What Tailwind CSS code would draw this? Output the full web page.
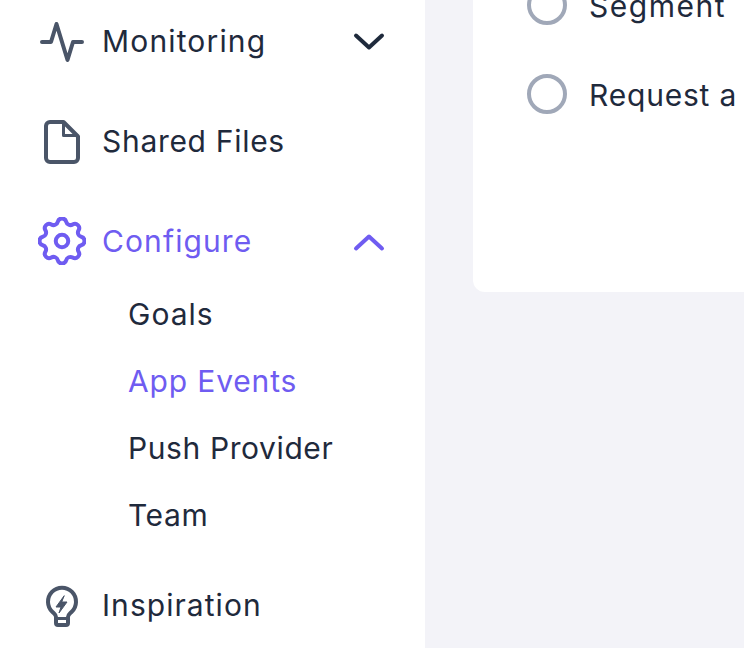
<!DOCTYPE html>
<html>
<head>
<meta charset="utf-8">
<script src="https://cdn.jsdelivr.net/npm/@tailwindcss/browser@4"></script>
</head>
<body class="m-0 overflow-hidden">
<div class="flex w-[744px] h-[648px] overflow-hidden bg-[#f3f3f8] font-['Inter',sans-serif]">
  <nav class="w-[425px] h-full shrink-0 bg-white overflow-hidden text-[30px] leading-[40px] text-[#1f2a3c] font-[375]">
    <div class="-mt-[9px]">
      <div class="h-[100px] flex items-center pl-[38px] pr-[40px]">
        <svg class="w-[48px] h-[48px] shrink-0 text-[#4a5568]" viewBox="0 0 48 48" fill="none" stroke="currentColor" stroke-width="4" stroke-linecap="round" stroke-linejoin="round"><path d="M4 25h9l5.500-18 11 36 5.500-18h9"/></svg>
        <span class="ml-[16px] flex-1 tracking-[1.15px]">Monitoring</span>
        <svg class="w-[32px] h-[20px] mt-[2px] text-[#1f2a3c]" viewBox="0 0 32 20" fill="none" stroke="currentColor" stroke-width="4" stroke-linecap="round" stroke-linejoin="round"><path d="M3 3.500l13 12 13-12"/></svg>
      </div>
      <div class="h-[100px] flex items-center pl-[38px] pr-[40px]">
        <svg class="w-[48px] h-[48px] shrink-0 text-[#4a5568]" viewBox="0 0 48 48" fill="none" stroke="currentColor" stroke-width="4" stroke-linecap="round" stroke-linejoin="round"><path d="M12 5h13.500L40 19.500V41a4 4 0 0 1-4 4H12a4 4 0 0 1-4-4V9a4 4 0 0 1 4-4z"/><path d="M25.500 6v12.500H39" stroke-width="3"/></svg>
        <span class="ml-[16px] flex-1 tracking-[0.7px]">Shared Files</span>
      </div>
      <div class="h-[100px] flex items-center pl-[38px] pr-[40px] text-[#6f5cf1]">
        <svg class="w-[48px] h-[48px] shrink-0" viewBox="2.400 2.400 19.200 19.200" fill="none" stroke="currentColor" stroke-width="1.600" stroke-linecap="round" stroke-linejoin="round"><path d="M10.325 4.317c.426-1.756 2.924-1.756 3.350 0a1.724 1.724 0 0 0 2.573 1.066c1.543-.940 3.310.826 2.370 2.370a1.724 1.724 0 0 0 1.065 2.572c1.756.426 1.756 2.924 0 3.350a1.724 1.724 0 0 0-1.066 2.573c.940 1.543-.826 3.310-2.370 2.370a1.724 1.724 0 0 0-2.572 1.065c-.426 1.756-2.924 1.756-3.350 0a1.724 1.724 0 0 0-2.573-1.066c-1.543.940-3.310-.826-2.370-2.370a1.724 1.724 0 0 0-1.065-2.572c-1.756-.426-1.756-2.924 0-3.350a1.724 1.724 0 0 0 1.066-2.573c-.940-1.543.826-3.310 2.370-2.370.996.608 2.296.070 2.572-1.065z"/><circle cx="12" cy="12" r="2.500"/></svg>
        <span class="ml-[16px] flex-1 tracking-[1.1px]">Configure</span>
        <svg class="w-[32px] h-[20px] mt-[2px]" viewBox="0 0 32 20" fill="none" stroke="currentColor" stroke-width="4" stroke-linecap="round" stroke-linejoin="round"><path d="M3 16.500l13-12 13 12"/></svg>
      </div>
      <ul class="-mt-[11px] pl-[128px] text-[#1f2a3c]">
        <li class="h-[67px] flex items-center tracking-[1px]">Goals</li>
        <li class="h-[67px] flex items-center text-[#6f5cf1] tracking-[0.85px]">App Events</li>
        <li class="h-[67px] flex items-center tracking-[0.6px]">Push Provider</li>
        <li class="h-[67px] flex items-center tracking-[0.6px]">Team</li>
      </ul>
      <div class="h-[100px] mt-[7px] flex items-center pl-[38px] pr-[40px]">
        <svg class="w-[48px] h-[48px] shrink-0 text-[#4a5568]" viewBox="0 0 48 48" fill="none" stroke="currentColor" stroke-width="4" stroke-linecap="round" stroke-linejoin="round"><path d="M18 36c0-2.500-1.500-3-3.500-5a14 14 0 1 1 19 0c-2 2-3.500 2.500-3.500 5v6a2 2 0 0 1-2 2h-8a2 2 0 0 1-2-2z"/><path d="M19 37.500h10" stroke-width="3"/><path d="M26 15l-8 11h5l-2 6 8-11h-5z" fill="currentColor" stroke-width="1"/></svg>
        <span class="ml-[16px] flex-1 tracking-[1.05px]">Inspiration</span>
      </div>
    </div>
  </nav>
  <main class="flex-1 min-w-0 pl-[48px] overflow-hidden">
    <section class="h-[292px] w-[400px] bg-white rounded-bl-[12px] pl-[54px] overflow-hidden text-[30px] leading-[40px] text-[#1f2a3c] font-[375]">
      <div class="-mt-[15px] flex flex-col gap-[49px] whitespace-nowrap">
        <div class="h-[40px] flex items-center"><span class="w-[40px] h-[40px] shrink-0 rounded-full border-4 border-[#a0a8b8]"></span><span class="ml-[22px] mt-[1px] tracking-[1.5px]">Segment</span></div>
        <div class="h-[40px] flex items-center"><span class="w-[40px] h-[40px] shrink-0 rounded-full border-4 border-[#a0a8b8]"></span><span class="ml-[22px] mt-[1px] tracking-[0.8px]">Request a</span></div>
      </div>
    </section>
  </main>
</div>
</body>
</html>
